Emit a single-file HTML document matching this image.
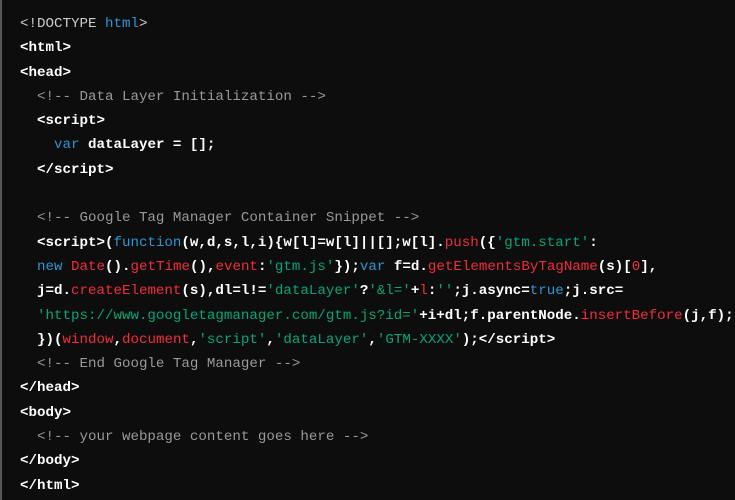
<!DOCTYPE html>
<html><head><style>
body{margin:0;background:#000;}
.c{position:absolute;left:0;top:0;width:735px;height:500px;background:#0d0d0d;border-left:2px solid #555;box-sizing:border-box;overflow:hidden}
pre{margin:0;position:absolute;left:18px;top:12px;font-family:"Liberation Mono",monospace;font-size:14.17px;line-height:24.3px;color:#fff;font-weight:bold}
.b{color:#2e95d3;font-weight:normal}.r{color:#f22c3d;font-weight:normal}.g{color:#00a67d;font-weight:normal}.m{color:#999;font-weight:normal}.n{color:#ccc;font-weight:normal}
</style></head><body><div class="c"><pre><span class="n">&lt;!DOCTYPE </span><span class="b">html</span><span class="n">&gt;</span>
&lt;html&gt;
&lt;head&gt;
  <span class="m">&lt;!-- Data Layer Initialization --&gt;</span>
  &lt;script&gt;
    <span class="b">var</span> dataLayer = [];
  &lt;/script&gt;

  <span class="m">&lt;!-- Google Tag Manager Container Snippet --&gt;</span>
  &lt;script&gt;(<span class="b">function</span>(w,d,s,l,i){w[l]=w[l]||[];w[l].<span class="r">push</span>({<span class="g">'gtm.start'</span>:
  <span class="b">new</span> <span class="r">Date</span>().<span class="r">getTime</span>(),<span class="r">event</span>:<span class="g">'gtm.js'</span>});<span class="b">var</span> f=d.<span class="r">getElementsByTagName</span>(s)[<span class="r">0</span>],
  j=d.<span class="r">createElement</span>(s),dl=l!=<span class="g">'dataLayer'</span>?<span class="g">'&amp;l='</span>+<span class="r">l</span>:<span class="g">''</span>;j.async=<span class="b">true</span>;j.src=
  <span class="g">'https://www.googletagmanager.com/gtm.js?id='</span>+i+dl;f.parentNode.<span class="r">insertBefore</span>(j,f);
  })(<span class="r">window</span>,<span class="r">document</span>,<span class="g">'script'</span>,<span class="g">'dataLayer'</span>,<span class="g">'GTM-XXXX'</span>);&lt;/script&gt;
  <span class="m">&lt;!-- End Google Tag Manager --&gt;</span>
&lt;/head&gt;
&lt;body&gt;
  <span class="m">&lt;!-- your webpage content goes here --&gt;</span>
&lt;/body&gt;
&lt;/html&gt;</pre></div></body></html>
